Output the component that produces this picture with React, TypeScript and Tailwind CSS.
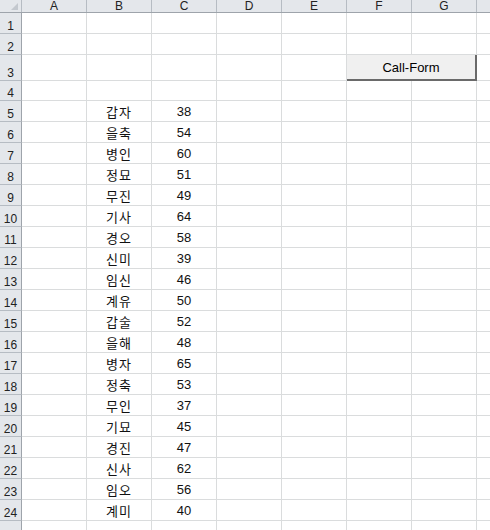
import React from "react";

const cols = ["A", "B", "C", "D", "E", "F", "G", ""];

const data: Record<number, [string, number]> = {
  5: ["갑자", 38],
  6: ["을축", 54],
  7: ["병인", 60],
  8: ["정묘", 51],
  9: ["무진", 49],
  10: ["기사", 64],
  11: ["경오", 58],
  12: ["신미", 39],
  13: ["임신", 46],
  14: ["계유", 50],
  15: ["갑술", 52],
  16: ["을해", 48],
  17: ["병자", 65],
  18: ["정축", 53],
  19: ["무인", 37],
  20: ["기묘", 45],
  21: ["경진", 47],
  22: ["신사", 62],
  23: ["임오", 56],
  24: ["계미", 40],
};

const rows = Array.from({ length: 25 }, (_, i) => i + 1);

const font = { fontFamily: '"Liberation Sans", "Noto Sans CJK KR", sans-serif' };

export default function App() {
  return (
    <div className="relative w-[490px] h-[530px] overflow-hidden bg-white text-[#111]" style={font}>
      {/* column header */}
      <div className="flex h-[13px] bg-[#e4e7eb] border-b border-[#9ea4ab]">
        <div className="relative w-[22px] shrink-0 border-r border-[#b6bcc3]">
          <svg className="absolute right-[3px] bottom-[2px]" width="7" height="7" viewBox="0 0 7 7">
            <path d="M7 0 L7 7 L0 7 Z" fill="#c3c8ce" />
          </svg>
        </div>
        {cols.map((c, i) => (
          <div
            key={i}
            className="w-[65px] shrink-0 border-r border-[#b6bcc3] flex items-center justify-center text-[12px] leading-none text-[#222]"
          >
            {c}
          </div>
        ))}
      </div>

      {rows.map((r) => {
        const h = r === 3 ? "h-[26px]" : r === 4 ? "h-[20px]" : "h-[21px]";
        const d = data[r];
        return (
          <div key={r} className={`flex ${h} border-b border-[#dadcdd]`}>
            <div className="w-[22px] shrink-0 bg-[#e4e7eb] border-r border-[#9ea4ab] flex items-end justify-center pb-[1px] text-[12px] leading-none text-[#222] -mb-px border-b border-b-[#b6bcc3]">
              {r < 25 ? r : ""}
            </div>
            {cols.map((_, i) => (
              <div
                key={i}
                className="w-[65px] shrink-0 border-r border-[#dadcdd] flex items-end justify-center pb-[3px] text-[13px] leading-none"
              >
                {d && i === 1 && (
                  <span className="tracking-[1px]" style={{ fontFamily: '"Noto Sans CJK KR", sans-serif' }}>
                    {d[0]}
                  </span>
                )}
                {d && i === 2 && <span>{d[1]}</span>}
              </div>
            ))}
          </div>
        );
      })}

      {/* form button over F3:G3 */}
      <button className="absolute left-[347px] top-[55px] w-[130px] h-[26px] bg-[#f0f0f0] border-r-2 border-b-2 border-[#6a6a6a] flex items-center justify-center text-[13px] text-black leading-none">
        Call-Form
      </button>
    </div>
  );
}
